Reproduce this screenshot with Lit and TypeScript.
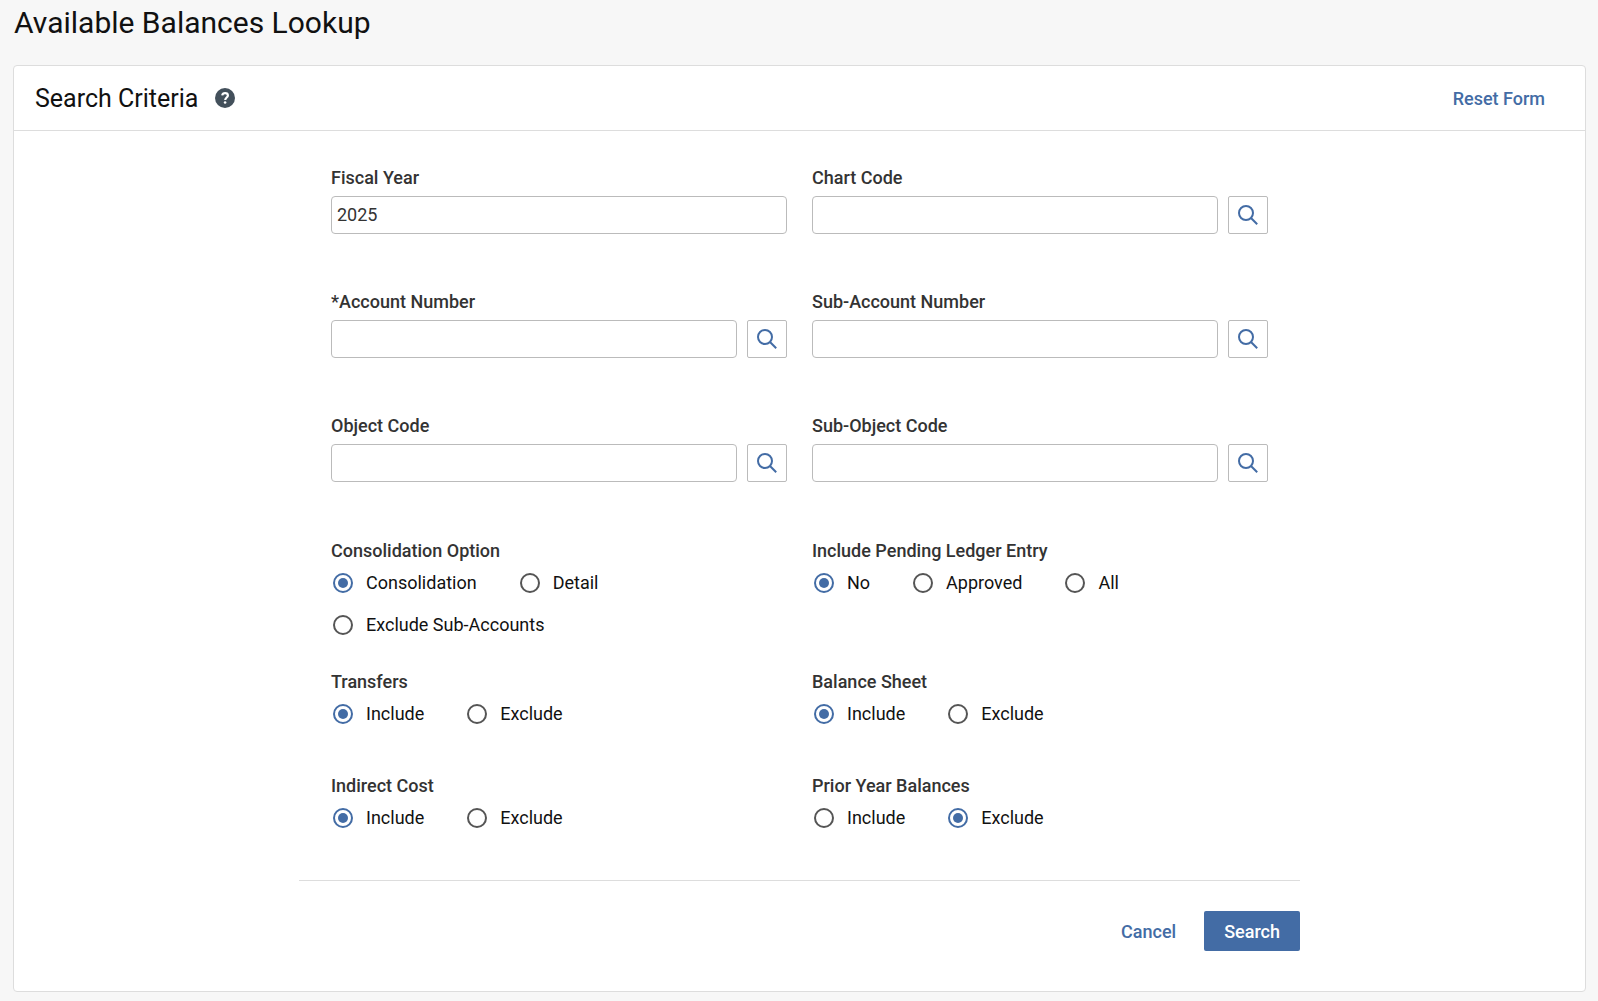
import { LitElement, html, css, nothing } from "lit";
import { customElement, property } from "lit/decorators.js";

const textStyles = css`
  :host,
  * {
    box-sizing: border-box;
  }
  button,
  input {
    font: inherit;
    color: inherit;
  }
  .label {
    display: block;
    padding: 0;
    font-weight: 500;
    line-height: 24px;
    color: #333;
  }
`;

/** Text box with its label and, when asked for, a lookup button. */
@customElement("lookup-field")
export class LookupField extends LitElement {
  @property() label = "";
  @property() value = "";
  @property({ type: Boolean }) required = false;
  @property({ type: Boolean }) lookup = false;

  static styles = [
    textStyles,
    css`
      :host {
        display: block;
        min-height: 92px;
      }
      .row {
        display: flex;
        gap: 10px;
        margin-top: 6px;
      }
      .box {
        flex: 1;
        min-width: 0;
        height: 38px;
        padding: 0 5px 2px;
        border: 1px solid #bbb;
        border-radius: 4px;
        background: #fff;
        color: #333;
      }
      .lookup {
        display: grid;
        place-items: center;
        width: 40px;
        height: 38px;
        padding: 0;
        border: 1px solid #bbb;
        border-radius: 2px;
        background: #fff;
        color: #436ca5;
        cursor: pointer;
      }
    `,
  ];

  render() {
    return html`
      <label class="label" for="box">${this.required ? "*" : ""}${this.label}</label>
      <div class="row">
        <input class="box" id="box" type="text" .value=${this.value} ?required=${this.required} />
        ${this.lookup
          ? html`<button class="lookup" type="button" aria-label="Look up ${this.label}">
              <svg width="20" height="20" viewBox="0 0 20 20" fill="none" stroke="currentColor" stroke-width="2" aria-hidden="true">
                <circle cx="8" cy="8" r="7" />
                <path d="M13 13L19.2 19.2" />
              </svg>
            </button>`
          : nothing}
      </div>
    `;
  }
}

/** Titled set of radio buttons. */
@customElement("radio-set")
export class RadioSet extends LitElement {
  @property() label = "";
  @property({ type: Array }) options: string[] = [];
  @property() value = "";

  static styles = [
    textStyles,
    css`
      :host {
        display: block;
        min-height: 72px;
        padding-top: 1px;
      }
      .set {
        min-width: 0;
        margin: 0;
        padding: 0;
        border: 0;
      }
      .options {
        display: flex;
        flex-wrap: wrap;
        gap: 18px 43px;
        margin-top: 8px;
        padding-left: 2px;
      }
      .option {
        display: flex;
        align-items: center;
        gap: 13px;
        line-height: 24px;
        color: #111;
        cursor: pointer;
      }
      .radio {
        appearance: none;
        display: grid;
        place-items: center;
        width: 20px;
        height: 20px;
        margin: 0;
        border: 2px solid #555;
        border-radius: 50%;
        background: #fff;
      }
      .radio:checked {
        border-color: #436ca5;
      }
      .radio:checked::before {
        content: "";
        width: 10px;
        height: 10px;
        border-radius: 50%;
        background: #436ca5;
      }
    `,
  ];

  render() {
    return html`
      <fieldset class="set">
        <legend class="label">${this.label}</legend>
        <div class="options">
          ${this.options.map(
            (option) => html`<label class="option">
              <input
                class="radio"
                type="radio"
                name="choice"
                .checked=${option === this.value}
                @change=${() => (this.value = option)}
              />${option}
            </label>`,
          )}
        </div>
      </fieldset>
    `;
  }
}

@customElement("app-root")
export class AppRoot extends LitElement {
  static styles = [
    textStyles,
    css`
      :host {
        display: block;
        min-height: 100vh;
        padding: 0 12px 9px 13px;
        background: #f7f7f7;
        font-family: Roboto, "Liberation Sans", sans-serif;
        font-size: 18px;
        color: #111;
      }
      .title {
        margin: 0;
        padding: 5px 1px 24px;
        font-size: 30px;
        font-weight: 400;
        line-height: 36px;
      }
      .card {
        border: 1px solid #ddd;
        border-radius: 4px;
        background: #fff;
      }
      .head {
        display: flex;
        align-items: center;
        gap: 17px;
        height: 65px;
        padding: 0 40px 0 21px;
        border-bottom: 1px solid #ddd;
      }
      .heading {
        margin: 0;
        padding-top: 2px;
        font-size: 25px;
        font-weight: 400;
        line-height: 32px;
      }
      .help {
        display: grid;
        padding: 0;
        border: 0;
        background: none;
        cursor: pointer;
      }
      .link {
        padding: 2px 0 0;
        border: 0;
        background: none;
        color: #436ca5;
        font-weight: 500;
        line-height: 24px;
        cursor: pointer;
      }
      .reset {
        margin-left: auto;
      }
      .form {
        max-width: 1001px;
        margin: 0 auto;
        padding-bottom: 40px;
      }
      .fields {
        display: grid;
        grid-template-columns: repeat(2, minmax(0, 1fr));
        gap: 32px 25px;
        padding: 35px 32px;
        border-bottom: 1px solid #ddd;
      }
      .actions {
        display: flex;
        justify-content: flex-end;
        align-items: center;
        gap: 28px;
        padding-top: 30px;
      }
      .search {
        height: 40px;
        padding: 0 20px;
        border: 0;
        border-radius: 2px;
        background: #436ca5;
        color: #fff;
        font-weight: 500;
        cursor: pointer;
      }
    `,
  ];

  render() {
    return html`
      <h1 class="title">Available Balances Lookup</h1>
      <main class="card">
        <header class="head">
          <h2 class="heading">Search Criteria</h2>
          <button class="help" type="button" aria-label="Help">
            <svg width="20" height="20" viewBox="0 0 20 20" aria-hidden="true">
              <circle cx="10" cy="10" r="10" fill="#43505b" />
              <path
                d="M7.2 7.4C7.5 5.9 8.6 5.1 10.1 5.1C11.8 5.1 12.9 6 12.9 7.4C12.9 9.4 10.2 9.6 10.2 12"
                fill="none"
                stroke="#fff"
                stroke-width="2.2"
              />
              <circle cx="10.1" cy="14.5" r="1.3" fill="#fff" />
            </svg>
          </button>
          <button class="link reset" type="button">Reset Form</button>
        </header>
        <form class="form" @submit=${(e: Event) => e.preventDefault()}>
          <div class="fields">
            <lookup-field label="Fiscal Year" value="2025"></lookup-field>
            <lookup-field label="Chart Code" lookup></lookup-field>
            <lookup-field label="Account Number" required lookup></lookup-field>
            <lookup-field label="Sub-Account Number" lookup></lookup-field>
            <lookup-field label="Object Code" lookup></lookup-field>
            <lookup-field label="Sub-Object Code" lookup></lookup-field>
            <radio-set
              label="Consolidation Option"
              .options=${["Consolidation", "Detail", "Exclude Sub-Accounts"]}
              value="Consolidation"
            ></radio-set>
            <radio-set label="Include Pending Ledger Entry" .options=${["No", "Approved", "All"]} value="No"></radio-set>
            <radio-set label="Transfers" .options=${["Include", "Exclude"]} value="Include"></radio-set>
            <radio-set label="Balance Sheet" .options=${["Include", "Exclude"]} value="Include"></radio-set>
            <radio-set label="Indirect Cost" .options=${["Include", "Exclude"]} value="Include"></radio-set>
            <radio-set label="Prior Year Balances" .options=${["Include", "Exclude"]} value="Exclude"></radio-set>
          </div>
          <div class="actions">
            <button class="link" type="button">Cancel</button>
            <button class="search" type="submit">Search</button>
          </div>
        </form>
      </main>
    `;
  }
}
